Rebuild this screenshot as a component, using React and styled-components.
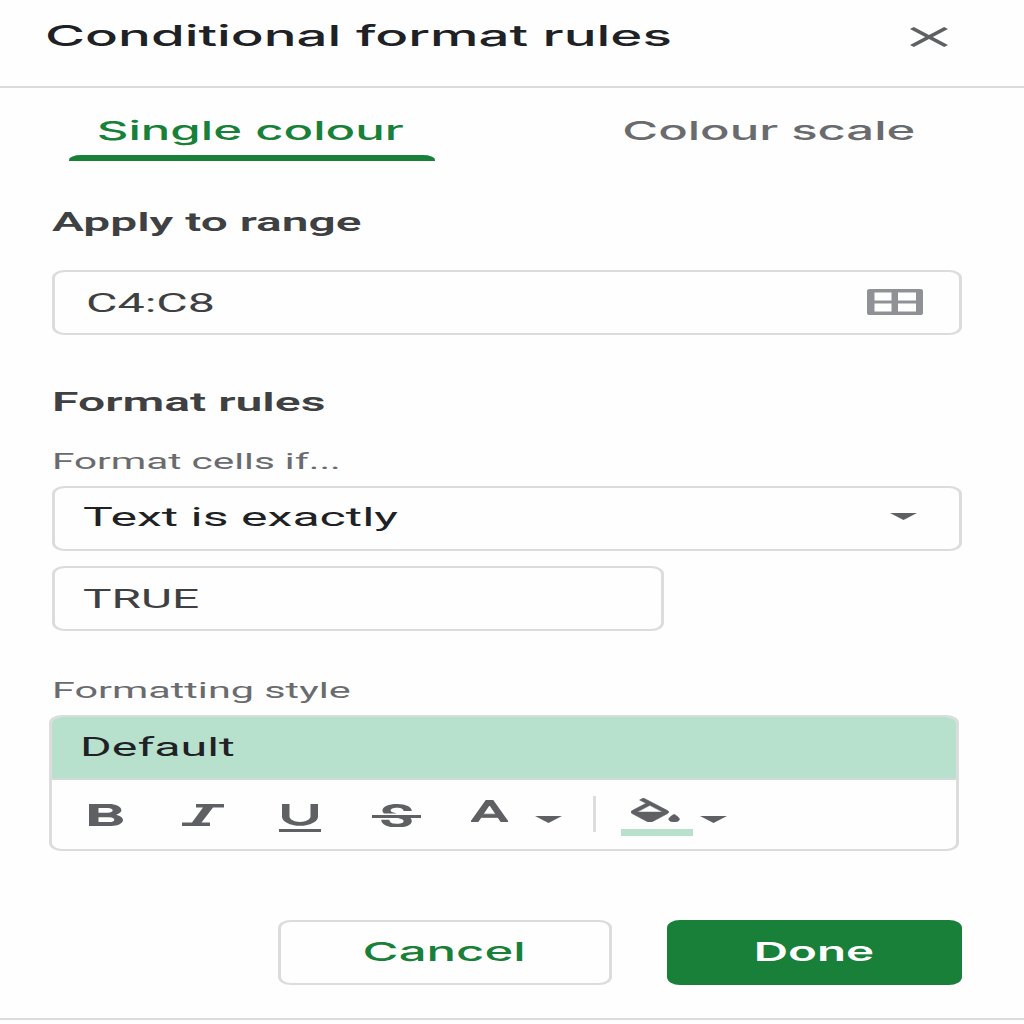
import React from 'react';
import styled, { createGlobalStyle } from 'styled-components';

const GlobalStyle = createGlobalStyle`
  * { box-sizing: border-box; }
  body { margin: 0; background: #fefefe; }
`;

const color = {
  line: '#dcdcdd',
  text: '#202124',
  heading: '#3f4042',
  muted: '#6a6b6e',
  icon: '#5f6063',
  green: '#188038',
  mint: '#b7e1cd',
};

const Panel = styled.main`
  display: flex;
  flex-direction: column;
  width: 1024px;
  height: 1024px;
  overflow: hidden;
  background: #fefefe;
  font-family: Roboto, 'Liberation Sans', sans-serif;
`;

/* Wide lettering: natural glyphs scaled along the x axis. */
const Wide = styled.span`
  display: block;
  white-space: nowrap;
  font-size: ${(p) => p.$size || 26}px;
  line-height: 32px;
  font-weight: ${(p) => p.$weight || 400};
  letter-spacing: ${(p) => p.$spacing || 0}px;
  color: ${(p) => p.$color || color.text};
  transform: scaleX(${(p) => p.$stretch || 1.93});
  transform-origin: ${(p) => (p.$center ? 'center' : 'left')} center;
`;

const WideDisplay = styled(Wide)`
  font-family: Inter, Roboto, sans-serif;
`;

const Header = styled.header`
  display: flex;
  justify-content: space-between;
  align-items: flex-start;
  height: 88px;
  padding: 20px 76px 0 45px;
  border-bottom: 2px solid ${color.line};
`;

const CloseButton = styled.button`
  display: flex;
  margin: 7px 0 0;
  padding: 0;
  border: 0;
  background: none;
`;

const Tabs = styled.nav`
  display: flex;
  gap: 152px;
  height: 73px;
  padding: 27px 0 0 69px;
`;

const Tab = styled.div`
  display: flex;
  flex-direction: column;
  align-items: center;
  justify-content: space-between;
  width: 366px;
`;

const TabLabel = styled.div`
  padding-right: 3px;
`;

const TabMarker = styled.span`
  width: 100%;
  height: 6px;
  border-radius: 12px 12px 0 0 / 5px 5px 0 0;
  background: ${color.green};
`;

const Form = styled.section`
  display: flex;
  flex-direction: column;
  align-items: flex-start;
  height: 758px;
  padding: 45px 62px 0 52px;
`;

const Label = styled.div`
  height: 32px;
  margin-top: ${(p) => p.$gap || 0}px;
`;

const Field = styled.div`
  display: flex;
  align-items: center;
  justify-content: space-between;
  width: ${(p) => p.$width || 910}px;
  height: 65px;
  margin-top: ${(p) => p.$gap}px;
  padding: 0 ${(p) => p.$right || 0}px ${(p) => p.$lift || 0}px ${(p) => p.$left}px;
  border: solid ${color.line};
  border-width: 2px 3px;
  border-radius: 13px / 8px;
`;

const FieldIcon = styled.span`
  display: flex;
  padding-bottom: 2px;
`;

const StyleBox = styled.div`
  width: 910px;
  height: 136px;
  margin: 8px 0 0 -3px;
  border: solid ${color.line};
  border-width: 2px 3px;
  border-radius: 13px / 8px;
  overflow: hidden;
`;

const Preview = styled.div`
  display: flex;
  align-items: center;
  height: 63px;
  padding: 0 0 2px 28px;
  background: ${color.mint};
  border-bottom: 2px solid #cfdcd5;
`;

const Toolbar = styled.div`
  display: flex;
  align-items: flex-start;
  padding-left: 37px;
`;

const Tool = styled.div`
  display: flex;
  margin: ${(p) => p.$top}px 0 0 ${(p) => p.$gap || 0}px;
`;

const Separator = styled.span`
  width: 3px;
  height: 36px;
  margin: 16px 0 0 31px;
  background: ${color.line};
`;

const FillTool = styled.div`
  display: flex;
  flex-direction: column;
  gap: 7px;
  width: 72px;
  margin: 18px 0 0 25px;
  padding-left: 10px;
`;

const Swatch = styled.span`
  width: 72px;
  height: 7px;
  margin-left: -10px;
  background: ${color.mint};
`;

const Footer = styled.footer`
  display: flex;
  justify-content: flex-end;
  gap: 55px;
  height: 101px;
  padding: 1px 62px 0 0;
  border-bottom: 2px solid ${color.line};
`;

const Button = styled.button`
  display: flex;
  align-items: center;
  justify-content: center;
  width: ${(p) => p.$width}px;
  height: 65px;
  margin: 0;
  padding: 0 2px 1px 0;
  font-family: inherit;
  border: solid ${(p) => (p.$primary ? color.green : color.line)};
  border-width: 2px 3px;
  border-radius: 13px / 8px;
  background: ${(p) => (p.$primary ? color.green : 'transparent')};
`;

const Glyph = ({ box, w, h, children }) => (
  <svg width={w} height={h} viewBox={box} preserveAspectRatio="none" fill={color.icon} display="block">
    {children}
  </svg>
);

const Caret = () => (
  <Glyph box="0 0 10 5" w={27} h={7}>
    <path d="M0 0h10L5 5z" />
  </Glyph>
);

export default function App() {
  return (
    <Panel>
      <GlobalStyle />
      <Header>
        <WideDisplay $size={29} $weight={500} $stretch={1.883}>Conditional format rules</WideDisplay>
        <CloseButton aria-label="Close">
          <Glyph box="5 5 14 14" w={38} h={20}>
            <path d="M19 6.41L17.59 5 12 10.59 6.41 5 5 6.41 10.59 12 5 17.59 6.41 19 12 13.41 17.59 19 19 17.59 13.41 12z" />
          </Glyph>
        </CloseButton>
      </Header>
      <Tabs>
        <Tab>
          <TabLabel><WideDisplay $center $weight={500} $stretch={1.89} $color={color.green}>Single colour</WideDisplay></TabLabel>
          <TabMarker />
        </Tab>
        <Tab>
          <TabLabel><WideDisplay $center $weight={500} $stretch={1.885} $color={color.muted}>Colour scale</WideDisplay></TabLabel>
        </Tab>
      </Tabs>
      <Form>
        <Label><Wide $weight={600} $stretch={1.84} $color={color.heading}>Apply to range</Wide></Label>
        <Field $gap={32} $left={31} $right={36}>
          <Wide $stretch={1.86} $color={color.heading}>C4:C8</Wide>
          <FieldIcon>
            <Glyph box="0 0 56 26" w={56} h={26}>
              <path fill="#8f9194" fillRule="evenodd" d="M3 0h50q3 0 3 2v22q0 2-3 2H3q-3 0-3-2V2q0-2 3-2zM7.500 3.500v8h17v-8zM31 3.500v8h18v-8zM7.500 14.500v8h17v-8zM31 14.500v8h18v-8z" />
            </Glyph>
          </FieldIcon>
        </Field>
        <Label $gap={51}><Wide $weight={600} $stretch={1.85} $color={color.heading}>Format rules</Wide></Label>
        <Label $gap={28}><Wide $size={22} $stretch={1.84} $color={color.muted}>Format cells if...</Wide></Label>
        <Field $gap={8} $left={28} $right={42} $lift={3}>
          <Wide $stretch={1.925}>Text is exactly</Wide>
          <FieldIcon><Caret /></FieldIcon>
        </Field>
        <Field $gap={15} $left={28} $width={612}>
          <Wide $stretch={1.84} $color={color.heading}>TRUE</Wide>
        </Field>
        <Label $gap={44}><Wide $size={22} $stretch={1.88} $color={color.muted}>Formatting style</Wide></Label>
        <StyleBox>
          <Preview><Wide $stretch={1.86}>Default</Wide></Preview>
          <Toolbar>
            <Tool $top={24}>
              <Glyph box="7 4 10.750 14" w={34} h={22}>
                <path d="M15.6 10.790c.97-.67 1.650-1.770 1.650-2.790 0-2.260-1.750-4-4-4H7v14h7.040c2.090 0 3.710-1.700 3.710-3.790 0-1.520-.86-2.820-2.150-3.420zM10 6.500h3c.83 0 1.500.67 1.500 1.500s-.67 1.500-1.500 1.500h-3v-3zm3.500 9H10v-3h3.500c.83 0 1.500.67 1.500 1.500s-.67 1.500-1.500 1.500z" />
              </Glyph>
            </Tool>
            <Tool $gap={59} $top={24}>
              <Glyph box="0 0 42 22" w={42} h={22}>
                <path d="M14 0h28v3.500H31L19.500 18.500H28V22H0v-3.500h10L21 3.500h-7z" />
              </Glyph>
            </Tool>
            <Tool $gap={55} $top={24}>
              <Glyph box="5 3 14 18" w={42} h={28}>
                <path d="M12 17c3.310 0 6-2.690 6-6V3h-2.500v8c0 1.930-1.570 3.500-3.500 3.500S8.500 12.930 8.500 11V3H6v8c0 3.310 2.690 6 6 6zm-7 2v2h14v-2H5z" />
              </Glyph>
            </Tool>
            <Tool $gap={51} $top={24}>
              <Glyph box="3 3 18 14.720" w={49} h={23}>
                <path d="M7.240 8.750c-.26-.48-.39-1.030-.39-1.670 0-.61.13-1.160.4-1.670.26-.5.63-.93 1.110-1.290.48-.35 1.050-.63 1.700-.83.66-.19 1.390-.29 2.180-.29.81 0 1.540.11 2.210.34.66.22 1.230.54 1.690.94.47.4.83.88 1.080 1.430s.38 1.150.38 1.810h-3.010c0-.31-.05-.59-.15-.85-.09-.27-.24-.49-.44-.68-.2-.19-.45-.33-.75-.44-.3-.1-.66-.16-1.060-.16-.39 0-.74.04-1.030.13s-.53.21-.72.36c-.19.16-.34.34-.44.55-.1.21-.15.43-.15.66 0 .48.25.88.74 1.210.38.25.77.48 1.410.7H7.390c-.05-.08-.11-.17-.15-.25zM21 12v-2H3v2h9.620c.18.07.4.14.55.2.37.17.66.34.87.51s.35.36.43.57c.07.2.11.43.11.69 0 .23-.05.45-.14.66-.09.2-.23.38-.42.53-.19.15-.42.26-.71.35-.29.08-.63.13-1.010.13-.43 0-.83-.04-1.180-.13s-.66-.23-.91-.42c-.25-.19-.45-.44-.59-.75s-.25-.76-.25-1.210H6.400c0 .55.08 1.130.24 1.580s.37.85.65 1.210c.28.35.6.66.98.92.37.26.78.48 1.220.65.44.17.9.3 1.380.39.48.08.96.13 1.440.13.8 0 1.530-.09 2.180-.28s1.210-.45 1.670-.79c.46-.34.82-.77 1.070-1.270s.38-1.070.38-1.710c0-.6-.1-1.140-.31-1.610-.05-.11-.11-.23-.17-.33H21z" />
              </Glyph>
            </Tool>
            <Tool $gap={50} $top={20}>
              <Glyph box="5.500 3 13 14" w={37} h={22}>
                <path d="M11 3L5.500 17h2.250l1.120-3h6.250l1.120 3h2.250L13 3h-2zm-1.380 9L12 5.670 14.380 12H9.620z" stroke={color.icon} strokeWidth=".6" />
              </Glyph>
            </Tool>
            <Tool $gap={27} $top={36}><Caret /></Tool>
            <Separator />
            <FillTool>
              <Glyph box="3 0 18 17" w={48.5} h={24}>
                <path d="M16.560 8.940L7.620 0 6.210 1.410l2.380 2.380-5.150 5.150c-.59.59-.59 1.540 0 2.120l5.500 5.500c.29.29.68.44 1.060.44s.77-.15 1.060-.44l5.500-5.500c.59-.58.59-1.530 0-2.120zM5.210 10L10 5.210 14.790 10H5.210zM19 11.500s-2 2.170-2 3.500c0 1.100.9 2 2 2s2-.9 2-2c0-1.330-2-3.500-2-3.500z" stroke={color.icon} strokeWidth=".3" />
              </Glyph>
              <Swatch />
            </FillTool>
            <Tool $gap={7} $top={36}><Caret /></Tool>
          </Toolbar>
        </StyleBox>
      </Form>
      <Footer>
        <Button $width={334}>
          <WideDisplay $center $weight={500} $stretch={1.89} $color={color.green}>Cancel</WideDisplay>
        </Button>
        <Button $width={295} $primary>
          <WideDisplay $center $weight={600} $stretch={1.83} $color="#fff">Done</WideDisplay>
        </Button>
      </Footer>
    </Panel>
  );
}
